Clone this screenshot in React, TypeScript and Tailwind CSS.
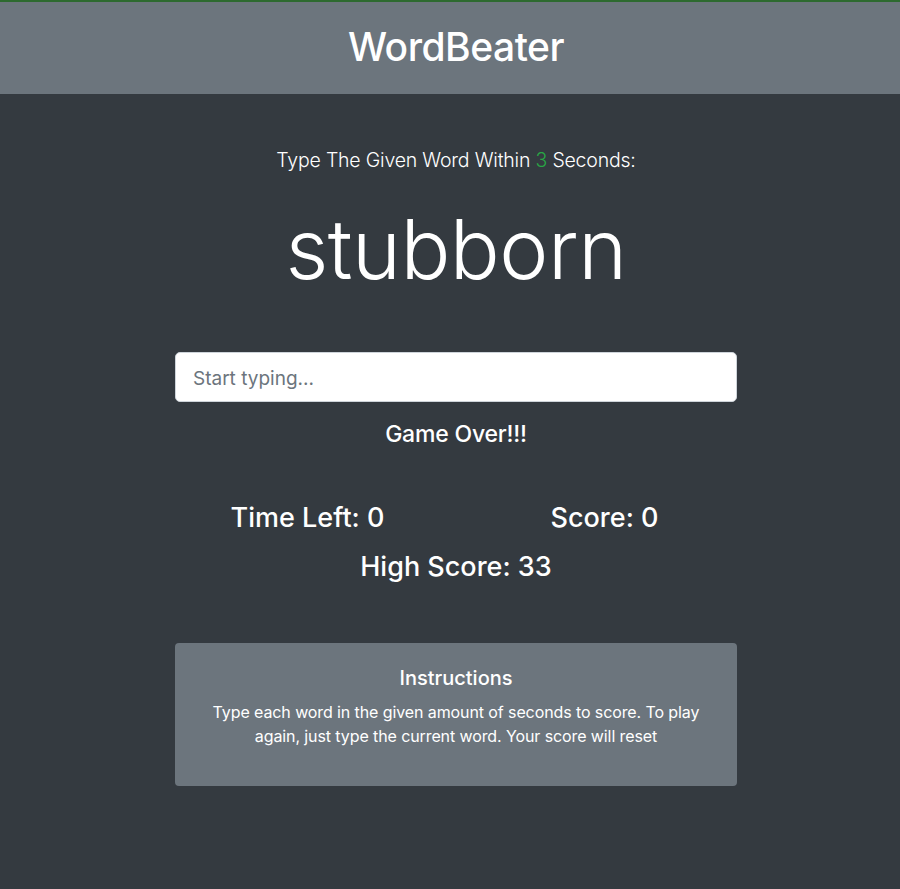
export default function App() {
  return (
    <div
      className="min-h-[889px] bg-[#343a40] pl-[12px] text-white"
      style={{ fontFamily: "Inter, 'Noto Sans', sans-serif" }}
    >
      <header className="-ml-[12px] h-[94px] border-t-2 border-[#2d6a2f] bg-[#6c757d] pl-[12px] pb-[4px] flex items-center justify-center">
        <h1 className="text-[39px] font-medium tracking-[-0.5px] leading-none">WordBeater</h1>
      </header>

      <main className="mx-auto w-[562px] pt-[57px] flex flex-col items-center text-center">
        <p className="text-[19.5px] font-light leading-none tracking-[-0.2px]">
          Type The Given Word Within <span className="text-[#28a745]">3</span> Seconds:
        </p>
        <h2 className="mt-[37px] text-[83px] font-light leading-none tracking-[-0.5px]">stubborn</h2>

        <input
          type="text"
          placeholder="Start typing..."
          className="mt-[61px] h-[50px] w-full rounded-[5px] border border-[#ced4da] bg-white px-[17px] pt-[4px] text-[19px] text-[#495057] placeholder:text-[#6c757d] outline-none"
        />

        <p className="mt-[21px] text-[23px] font-medium leading-none tracking-[-0.2px]">Game Over!!!</p>

        <div className="mt-[58px] grid w-[594px] grid-cols-2 text-[27px] font-medium leading-none">
          <span>Time Left: 0</span>
          <span>Score: 0</span>
        </div>
        <p className="mt-[22px] text-[27px] font-medium leading-none">High Score: 33</p>

        <div className="mt-[63px] h-[143px] w-full rounded-[4px] bg-[#6c757d] px-5 pt-[25px]">
          <h3 className="text-[20px] font-medium leading-none">Instructions</h3>
          <p className="mt-[12px] text-[16px] leading-[24px] tracking-[-0.1px]">
            Type each word in the given amount of seconds to score. To play again, just type the current word. Your score will reset
          </p>
        </div>
      </main>
    </div>
  );
}
